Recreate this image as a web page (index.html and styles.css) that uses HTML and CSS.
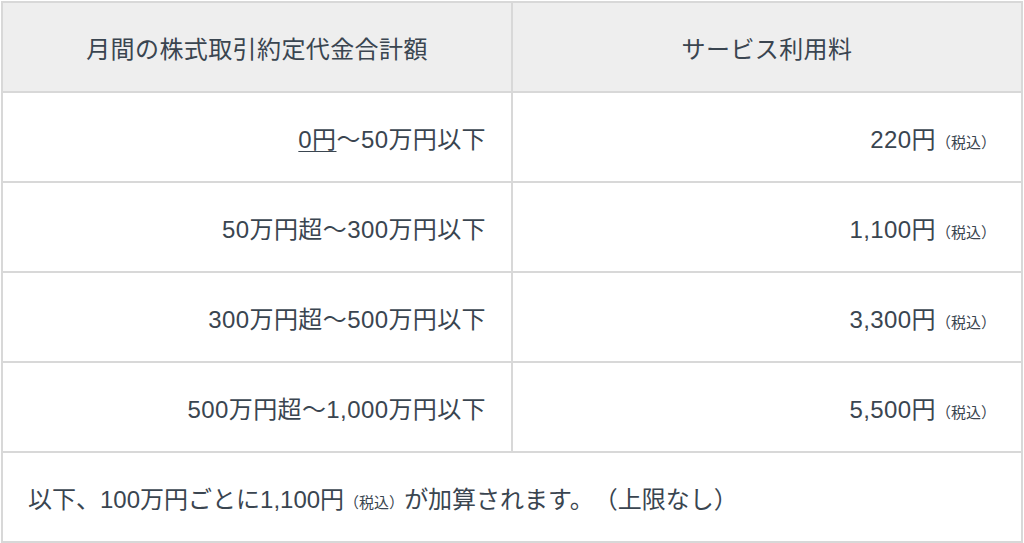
FILE: index.html
```html
<!DOCTYPE html>
<html lang="ja">
<head>
<meta charset="utf-8">
<title>サービス利用料</title>
<link rel="stylesheet" href="styles.css">
</head>
<body>
<table class="fee">
  <thead>
    <tr>
      <th class="col">月間の株式取引約定代金合計額</th>
      <th class="col">サービス利用料</th>
    </tr>
  </thead>
  <tbody>
    <tr>
      <td class="range"><a class="link" href="#">0円</a>〜50万円以下</td>
      <td class="price">220円<span class="tax">（税込）</span></td>
    </tr>
    <tr>
      <td class="range">50万円超〜300万円以下</td>
      <td class="price">1,100円<span class="tax">（税込）</span></td>
    </tr>
    <tr>
      <td class="range">300万円超〜500万円以下</td>
      <td class="price">3,300円<span class="tax">（税込）</span></td>
    </tr>
    <tr>
      <td class="range">500万円超〜1,000万円以下</td>
      <td class="price">5,500円<span class="tax">（税込）</span></td>
    </tr>
    <tr>
      <td class="note" colspan="2">以下、100万円ごとに1,100円<span class="tax">（税込）</span>が加算されます。（上限なし）</td>
    </tr>
  </tbody>
</table>
</body>
</html>
```
FILE: styles.css
```css
html, body {
  margin: 0;
  background: #ffffff;
}
body {
  padding: 1px;
  font-family: "Liberation Sans", "Noto Sans CJK JP", sans-serif;
  color: #3a4550;
}
.fee {
  width: 1022px;
  border-collapse: collapse;
  table-layout: fixed;
  font-size: 24px;
  letter-spacing: 0.4px;
  text-spacing-trim: space-all;
}
.fee th,
.fee td {
  border: 2px solid #d8d8d8;
  height: 90px;
  padding: 0 25px;
  box-sizing: border-box;
  vertical-align: middle;
}
.col {
  width: 50%;
  background: #eeeeee;
  font-weight: normal;
  text-align: center;
  height: 91px;
}
.range,
.price {
  text-align: right;
}
.link {
  color: inherit;
  text-decoration: underline;
  text-underline-offset: 3px;
  text-decoration-thickness: 1px;
}
.tax {
  font-size: 15px;
  letter-spacing: 0;
}
.note {
  text-align: left;
  padding-left: 19px;
  letter-spacing: 0;
}
```
